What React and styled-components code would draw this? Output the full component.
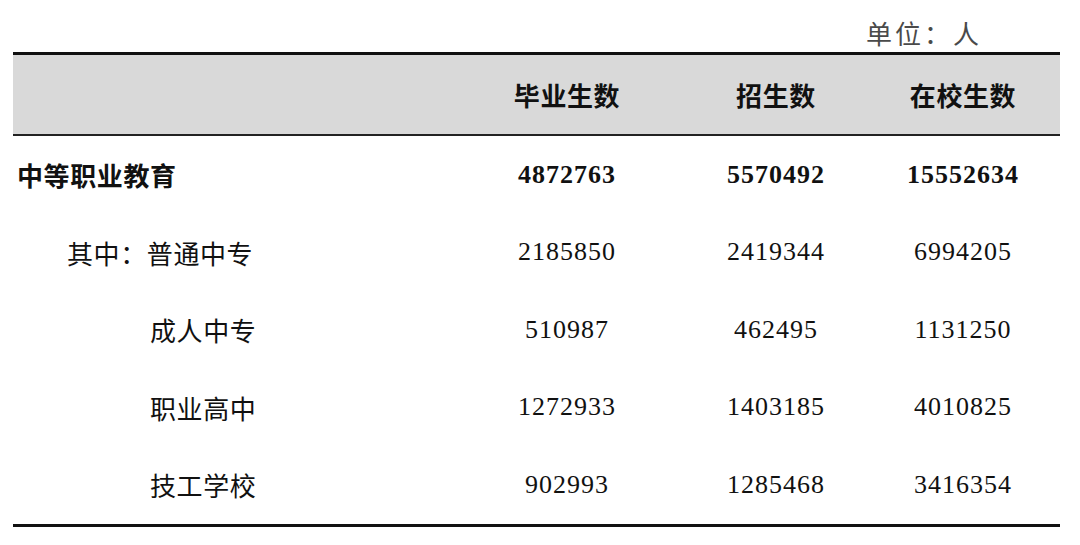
import styled, { createGlobalStyle } from "styled-components";

const GlobalStyle = createGlobalStyle`
  body {
    margin: 0;
    background: #ffffff;
  }
`;

const Page = styled.div`
  width: 1080px;
  height: 545px;
  padding: 0 20px 0 13px;
  box-sizing: border-box;
  background: #fff;
  font-family: "Noto Sans CJK SC", "Noto Sans", sans-serif;
`;

const Caption = styled.div`
  height: 52px;
  display: flex;
  align-items: center;
  justify-content: flex-end;
  padding-right: 78px;
  padding-top: 12px;
  box-sizing: border-box;
  font-size: 26px;
  color: #4a4a4a;
  letter-spacing: 3px;
`;

const Table = styled.div`
  width: 1047px;
  border-top: 3px solid #111;
  border-bottom: 3px solid #111;
`;

const Row = styled.div`
  display: grid;
  grid-template-columns: 457px 194px 224px 150px 22px;
  align-items: center;
  height: ${(p) => (p.$head ? "79px" : "77.5px")};
  background: ${(p) => (p.$head ? "#d9d9d9" : "transparent")};
  border-bottom: ${(p) => (p.$head ? "2px solid #222" : "none")};
`;

const Label = styled.div`
  font-size: 26px;
  font-weight: ${(p) => (p.$bold ? 700 : 400)};
  color: #111;
  padding-left: ${(p) => p.$indent}px;
  letter-spacing: 0.6px;
  white-space: nowrap;
`;

const HeadCell = styled.div`
  text-align: center;
  font-size: 26px;
  font-weight: 700;
  color: #111;
  letter-spacing: 0.6px;
`;

const Num = styled.div`
  text-align: center;
  font-family: "Liberation Serif", "Times New Roman", serif;
  font-size: 26px;
  font-weight: ${(p) => (p.$bold ? 700 : 400)};
  letter-spacing: 1px;
  color: #111;
`;

const rows = [
  { label: "中等职业教育", indent: 4, bold: true, v: ["4872763", "5570492", "15552634"] },
  { label: "其中：普通中专", indent: 54, v: ["2185850", "2419344", "6994205"] },
  { label: "成人中专", indent: 137, v: ["510987", "462495", "1131250"] },
  { label: "职业高中", indent: 137, v: ["1272933", "1403185", "4010825"] },
  { label: "技工学校", indent: 137, v: ["902993", "1285468", "3416354"] },
];

export default function App() {
  return (
    <>
      <GlobalStyle />
      <Page>
        <Caption>单位：人</Caption>
        <Table>
          <Row $head>
            <div />
            <HeadCell>毕业生数</HeadCell>
            <HeadCell>招生数</HeadCell>
            <HeadCell>在校生数</HeadCell>
            <div />
          </Row>
          {rows.map((r) => (
            <Row key={r.label}>
              <Label $indent={r.indent} $bold={r.bold}>
                {r.label}
              </Label>
              {r.v.map((n, i) => (
                <Num key={i} $bold={r.bold}>
                  {n}
                </Num>
              ))}
              <div />
            </Row>
          ))}
        </Table>
      </Page>
    </>
  );
}
